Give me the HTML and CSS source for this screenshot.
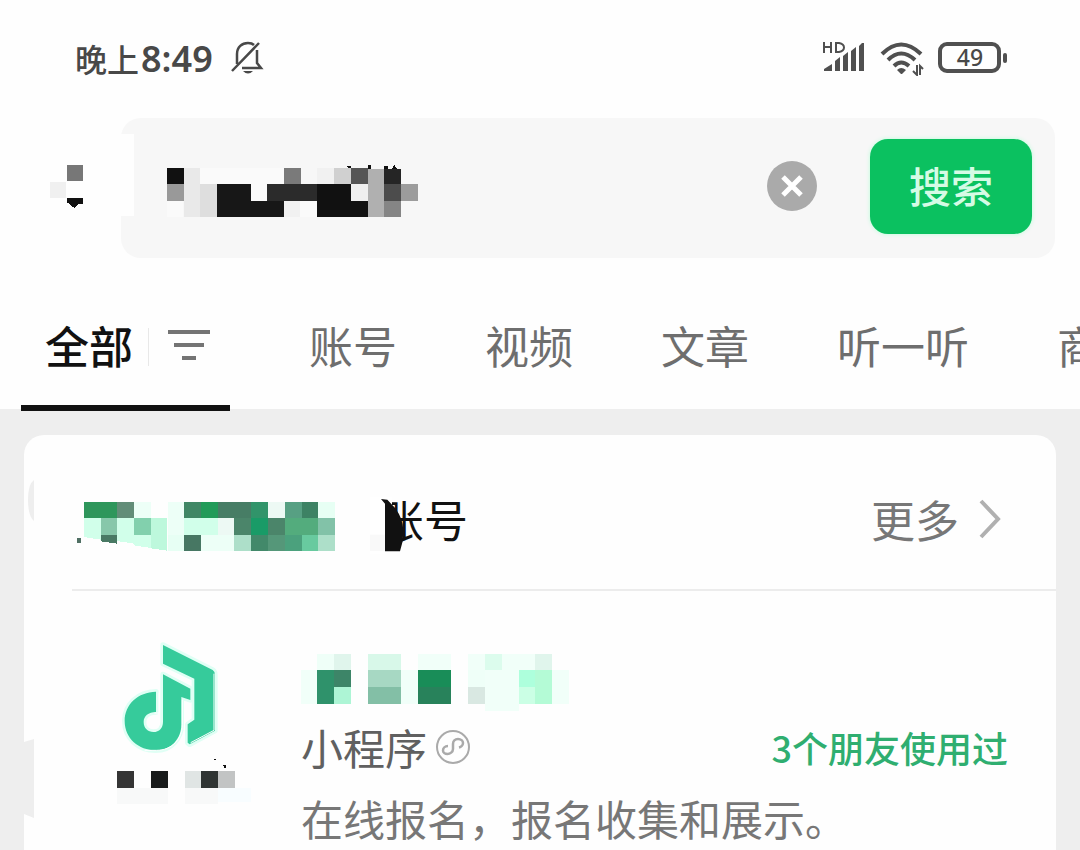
FILE: index.html
```html
<!DOCTYPE html>
<html lang="zh-CN">
<head>
<meta charset="utf-8">
<meta name="viewport" content="width=device-width, initial-scale=1">
<title>搜索</title>
<link rel="stylesheet" href="styles.css">
</head>
<body>
<header class="status">
  <span class="time">晚上<span class="clock">8:49</span></span>
  <svg class="bell" width="36" height="36" viewBox="0 0 36 36" fill="none" stroke="#484848" stroke-width="2.5">
    <path d="M8 24V14C8 7 13 3 19 3c3 0 5 1 6 2M28 10v13l4 5H13M3 31 30 3"/>
    <path d="M14 31h10q-5 5-10 0z" fill="#484848" stroke="none"/>
  </svg>
  <div class="indicators">
    <svg width="44" height="36" viewBox="0 0 44 36" fill="none" stroke="#505050">
      <path d="M2 2v11M9 2v11M2 7h7M14 3v9h3q5-1 5-4.500t-5-4.500z" stroke-width="2"/>
      <path d="M2 31v-2l8-5v7zM13 31V21l5-4v14zM21 31V16l5-4v19zM29 31V11l5-4v24zM37 31V6l3-3h2v28z" fill="#505050" stroke="none"/>
    </svg>
    <svg width="44" height="36" viewBox="0 0 44 36" fill="none" stroke="#505050" stroke-width="4">
      <path d="M2 14Q21-5 41 14M8 20Q21 7 35 20M14 26Q21 19 29 26"/>
      <path d="M17 30q4-4 9 0l-4 4h-1z" fill="#505050" stroke="none"/>
      <path d="M37 25v10l-4-4M40 35V26l3 3" stroke-width="2"/>
    </svg>
    <svg width="70" height="36" viewBox="0 0 70 36">
      <rect x="2" y="4" width="59" height="27" rx="7" fill="none" stroke="#505050" stroke-width="4"/>
      <rect x="65" y="13" width="4" height="10" rx="2" fill="#505050"/>
      <text class="charge" x="32" y="26" text-anchor="middle">49</text>
    </svg>
  </div>
</header>

<form class="search">
  <button class="back" type="button" aria-label="返回">
    <svg width="36" height="48" viewBox="88 170 108 144" shape-rendering="crispEdges">
      <path d="M141 174h50v48h-50z" fill="#777"/><path d="M90 223h50v49H90z" fill="#f0f0f0"/>
      <path d="M141 273h50v18h-17l-9 12-24-19z" fill="#111"/>
    </svg>
  </button>
  <div class="field">
    <svg class="query" width="254" height="54" viewBox="440 163 762 162" shape-rendering="crispEdges">
      <path d="M543 174h250v49h-50v50h-49v-50H543zM442 273h50v50h-50zM843 273h50v50h-50z" fill="#fafafa"/>
      <path d="M493 174h50v149h-50z" fill="#e9e9e9"/><path d="M543 223h50v100h-50z" fill="#dedede"/>
      <path d="M442 174h51v49h-51z" fill="#111"/><path d="M442 223h51v50h-51z" fill="#999"/>
      <path d="M593 223h101v50h101v50H593z" fill="#171717"/>
      <path d="M744 223h150v50H744z" fill="#2b2b2b"/><path d="M795 174h49v49h-49z" fill="#7a7a7a"/>
      <path d="M795 273h48v50h-48zM894 174h51v49h-51z" fill="#f1f1f1"/>
      <path d="M894 223h102v50h49v50H894z" fill="#111"/>
      <path d="M945 174h51v49h-51z" fill="#d0d0d0"/><path d="M996 174h49v49h-49z" fill="#555"/>
      <path d="M996 223h49v50h-49z" fill="#efefef"/><path d="M1045 178h50v145h-50z" fill="#b0b0b0"/>
      <path d="M1095 178h51v45h-51z" fill="#252525"/><path d="M1095 223h51v50h-51z" fill="#4c4c4c"/>
      <path d="M1095 273h51v50h-51z" fill="#858585"/><path d="M1146 223h50v50h-50z" fill="#9c9c9c"/>
      <path d="M976 173l12-4h8v5zM1046 166h10v12h-10zM1095 168h10v10h-10zM1118 178l7-12 8 12z" fill="#111"/>
    </svg>
    <input class="input" type="text" aria-label="搜索内容">
    <button class="clear" type="reset" aria-label="清除">
      <svg width="22" height="22" viewBox="0 0 22 22" stroke="#fff" stroke-width="5"><path d="M2 2l18 18M20 2 2 20"/></svg>
    </button>
    <button class="submit" type="submit">搜索</button>
  </div>
</form>

<nav class="tabs">
  <a class="tab active" href="#all">全部
    <svg class="filter" width="62" height="40" viewBox="0 0 62 40">
      <path d="M0 1h1v38H0z" fill="#e8e8e8"/>
      <path d="M20 3h42v4H20zM26 16h30v4H26zM34 29h14v4H34z" fill="#747474"/>
    </svg>
  </a>
  <a class="tab" href="#accounts">账号</a>
  <a class="tab" href="#videos">视频</a>
  <a class="tab" href="#articles">文章</a>
  <a class="tab" href="#listen">听一听</a>
  <a class="tab" href="#goods">商</a>
</nav>

<main class="results">
  <section class="card">
    <svg class="edge" width="10" height="346" viewBox="0 0 10 346">
      <path d="M10 0v41Q4 36 4 20T10 0zM0 262l10-3v79l-10-4z" fill="#eee"/>
    </svg>
    <div class="card-head">
      <svg class="brand" width="260" height="56" viewBox="228 84 780 168" shape-rendering="crispEdges">
        <path d="M402 98h50v49h-50zM503 98h50v99h-50zM603 197h100v49H603z" fill="#edfff7"/>
        <path d="M252 147h50v65l-50-8zM352 147h50v77l-50-8zM402 197h50v40l-50-8zM553 147h100v50H553z" fill="#d1ffea"/>
        <path d="M452 147h50v98l-50-7z" fill="#bdf8dc"/><path d="M503 197h50v49h-50zM955 98h50v49h-50z" fill="#e7fff4"/>
        <path d="M252 98h100v49H252z" fill="#2e965b"/><path d="M352 98h50v49h-50z" fill="#628d78"/>
        <path d="M302 147h50v50h-50z" fill="#87c7aa"/><path d="M302 197h50v27l-50-7z" fill="#497964"/>
        <path d="M402 147h50v50h-50z" fill="#82d0ad"/>
        <path d="M553 98h50v49h-50z" fill="#408765"/><path d="M603 98h50v49h-50z" fill="#229b59"/>
        <path d="M653 98h100v49H653z" fill="#477d65"/><path d="M753 98h50v49h-50z" fill="#31946a"/>
        <path d="M804 98h51v49h-51zM653 147h50v50h-50z" fill="#edf9f4"/><path d="M855 98h50v49h-50z" fill="#57a083"/>
        <path d="M905 98h49v49h-49z" fill="#3d8264"/><path d="M553 197h50v49h-50z" fill="#477763"/>
        <path d="M703 147h50v50h-50zM804 147h51v50h-51z" fill="#4b856a"/><path d="M753 147h51v50h-51z" fill="#199b67"/>
        <path d="M855 147h99v50h-99z" fill="#53ac7d"/><path d="M954 147h51v50h-51z" fill="#82c2a8"/>
        <path d="M703 197h50v49h-50zM954 197h51v49h-51z" fill="#addfc9"/><path d="M753 197h51v49h-51z" fill="#42896a"/>
        <path d="M804 197h51v49h-51z" fill="#559779"/><path d="M855 197h50v49h-50z" fill="#4ba17d"/>
        <path d="M905 197h49v49h-49z" fill="#68ca9f"/><path d="M232 208h11v13h-11z" fill="#507064"/>
      </svg>
      <h2 class="heading">账号
        <svg class="smudge" width="38" height="60" viewBox="1110 84 114 180">
          <path d="M1110 84h35l11 10v160h-46z" fill="#fff"/><path d="M1105 197h50v49h-50z" fill="#f9f9f9"/>
          <path d="M1143 70h33v50l-12-28h-21z" fill="#fff"/>
          <path d="M1143 90l19 2 24 26q23 32 24 65t-10 64h-45V104z" fill="#111"/>
        </svg>
      </h2>
      <a class="more" href="#more">更多
        <svg width="24" height="40" viewBox="0 0 24 40" fill="none" stroke="#b0b0b0" stroke-width="4"><path d="M2 2l17 18L2 38"/></svg>
      </a>
    </div>
    <article class="item">
      <svg class="logo" width="140" height="164" viewBox="80 60 420 492">
        <g fill="#36cb9b" stroke="#e0fff5" stroke-width="16" paint-order="stroke" stroke-linejoin="round">
          <path d="M218 72l149 75q7 5 7 14v168l-76 41-6-5v-55l20-14V173l-94-45z"/>
          <path d="M218 160l82 43v34l-27-9v83c0 39-28 77-77 77-51 0-93-36-93-88 0-50 40-87 94-88v61c-23 1-37 12-37 30 0 19 13 30 29 30 18 0 29-12 29-31z"/>
        </g>
        <path d="M206 215v61h-14M276 236v75c0 43-31 77-78 77h-35M371 158v170l-70 37" fill="none" stroke="#fff" stroke-width="3"/>
        <g shape-rendering="crispEdges">
          <path d="M81 450h51v50H81z" fill="#353535"/><path d="M182 450h51v50h-51z" fill="#191b1b"/>
          <path d="M283 450h50v50h-50z" fill="#e0e5e4"/><path d="M333 450h51v50h-51z" fill="#2f3433"/>
          <path d="M384 450h49v50h-49z" fill="#c2c4c4"/><path d="M81 500h152v48H81zM283 500h100v48H283z" fill="#f8f9f9"/>
          <path d="M383 500h100v44H383z" fill="#f8fdff"/>
          <path d="M368 413l10 3v4zM398 431l10 2v8h-6z" fill="#111"/>
        </g>
      </svg>
      <div class="info">
        <svg class="name" width="270" height="60" viewBox="36 60 810 180" shape-rendering="crispEdges">
          <path d="M35 118h50v101H35zM336 118h51v101h-51zM387 69h99v49h-99zM538 69h250v49H538zM588 118h102v121H588zM789 118h50v101h-50z" fill="#f1fff9"/>
          <path d="M85 69h50v49H85zM538 118h50v51h-50z" fill="#effff8"/><path d="M135 69h51v49h-51zM739 69h49v49h-49z" fill="#e0f5ec"/>
          <path d="M236 69h100v49H236z" fill="#d8f8e9"/><path d="M588 69h50v49h-50z" fill="#dcfced"/>
          <path d="M85 118h50v101H85z" fill="#2f926b"/><path d="M135 118h51v50h-51z" fill="#3d8568"/><path d="M135 168h51v51h-51z" fill="#adf5d5"/>
          <path d="M236 118h100v50H236z" fill="#a7d8c3"/><path d="M236 168h100v51H236z" fill="#83bfa6"/>
          <path d="M387 118h99v50h-99z" fill="#198d58"/><path d="M387 168h99v51h-99z" fill="#28825b"/>
          <path d="M538 168h49v51h-49z" fill="#d9e8e2"/><path d="M690 118h49v50h-49z" fill="#adffdc"/>
          <path d="M739 118h49v101h-49z" fill="#b4fbd6"/><path d="M690 168h49v51h-49z" fill="#cbffe5"/>
        </svg>
        <div class="meta">
          <span class="kind">小程序</span>
          <svg width="36" height="36" viewBox="0 0 36 36" fill="none" stroke="#aaa" stroke-width="2">
            <circle cx="18" cy="18" r="16"/>
            <path d="M13 17c-3 0-5 2-5 4.500 0 2 2 3.500 4.500 3.500s5.500-2 5.500-5v-5c0-3 2-5 5-5s5 2 5 4-2 4-4 4.500" stroke-width="2.500"/>
          </svg>
          <span class="friends">3个朋友使用过</span>
        </div>
        <p class="desc">在线报名，报名收集和展示。</p>
      </div>
    </article>
  </section>
</main>
</body>
</html>
```
FILE: styles.css
```css
* { box-sizing: border-box; }
body {
  margin: 0;
  height: 100vh;
  overflow: hidden;
  display: flex;
  flex-direction: column;
  background: #fefefe;
  color: #111;
  font-family: "Noto Sans CJK SC", sans-serif;
}
svg { display: block; flex: none; }
button { flex: none; border: 0; padding: 0; font: inherit; background: none; cursor: pointer; }
a { color: inherit; text-decoration: none; }

.status {
  flex: none;
  display: flex;
  align-items: center;
  height: 116px;
  padding: 0 72px 0 75px;
}
.time { font-size: 32px; line-height: 48px; font-weight: 500; color: #484848; }
.clock { margin-left: 2px; font-family: "Noto Sans", sans-serif; font-size: 36px; font-weight: 600; }
.bell { margin-left: 16px; }
.indicators { display: flex; gap: 14px; margin-left: auto; }
.charge { font-family: "Noto Sans", sans-serif; font-size: 23px; font-weight: 500; fill: #484848; }

.search { flex: none; display: flex; align-items: center; margin-top: 2px; padding-right: 25px; }
.back { width: 121px; height: 140px; padding-left: 49px; }
.field {
  flex: 1;
  min-width: 0;
  display: flex;
  align-items: center;
  height: 140px;
  padding: 0 23px 4px 45px;
  border-radius: 20px;
  background: linear-gradient(#fefefe, #fefefe) 0 16px / 13px 82px no-repeat, #f7f7f7;
}
.input {
  flex: 1;
  min-width: 0;
  height: 80px;
  border: 0;
  outline: 0;
  background: transparent;
  font: inherit;
  font-size: 42px;
}
.query { margin-top: 10px; }
.clear {
  display: grid;
  place-items: center;
  width: 50px;
  height: 50px;
  border-radius: 50%;
  background: #aaa;
}
.submit {
  width: 162px;
  height: 95px;
  margin-left: 53px;
  padding-bottom: 4px;
  border-radius: 18px;
  background: #0bc160;
  box-shadow: 0 0 4px #b8ffd8;
  color: #d5fbe5;
  font-size: 42px;
  font-weight: 500;
}

.tabs {
  position: relative;
  z-index: 1;
  flex: none;
  display: flex;
  height: 153px;
  margin-bottom: -2px;
  padding-left: 21px;
  overflow: hidden;
}
.tab {
  flex: none;
  padding: 55px 44px 0;
  font-size: 44px;
  line-height: 64px;
  color: #6e6e6e;
}
.active {
  display: flex;
  gap: 15px;
  margin-right: 35px;
  padding: 55px 20px 0 24px;
  border-bottom: 6px solid #111;
  color: #111;
  font-weight: 500;
}
.filter { margin-top: 14px; }

.results { flex: 1; padding: 26px 24px 0; background: #eee; }
.card { position: relative; min-height: 100%; border-radius: 20px 20px 0 0; background: #fefefe; }
.edge { position: absolute; left: 0; top: 45px; }
.card-head {
  display: flex;
  align-items: center;
  height: 156px;
  margin-left: 48px;
  padding: 14px 53px 0 4px;
  border-bottom: 2px solid #ececec;
}
.brand { margin-top: 12px; }
.heading {
  position: relative;
  margin: 0 0 0 44px;
  font-size: 44px;
  line-height: 64px;
  font-weight: 400;
}
.smudge { position: absolute; left: -10px; top: 10px; }
.more {
  display: flex;
  align-items: center;
  gap: 20px;
  margin-left: auto;
  font-size: 44px;
  line-height: 64px;
  color: #777;
}
.item { display: flex; gap: 44px; padding: 50px 48px 0 93px; }
.info { flex: 1; padding-top: 10px; }
.meta { display: flex; align-items: center; gap: 8px; height: 60px; margin-top: 6px; }
.kind { font-size: 42px; line-height: 60px; color: #606060; }
.friends { margin-left: auto; font-size: 36px; line-height: 52px; font-weight: 500; color: #2fae70; }
.desc { margin: 13px 0 0; font-size: 42px; line-height: 56px; color: #777; white-space: nowrap; }
```
